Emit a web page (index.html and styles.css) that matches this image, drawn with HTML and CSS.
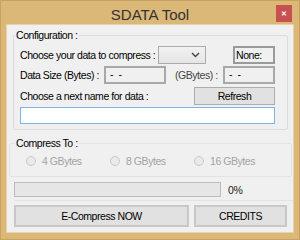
FILE: index.html
```html
<!DOCTYPE html>
<html lang="en">
<head>
    <meta charset="UTF-8">
    <title>SDATA Tool</title>
    <link rel="stylesheet" href="styles.css">
</head>
<body>

<div class="window">
    <div class="title-bar">
        <span class="title">SDATA Tool</span>
        <span class="close-btn">&#x2715;</span>
    </div>

    <div class="client">
        <fieldset class="group config">
            <legend>Configuration :</legend>
            <div class="row row-one">
                <span class="lbl choose">Choose your data to compress :</span>
                <div class="combo"><svg width="9" height="6" viewBox="0 0 9 6"><path d="M1 1 L4.5 4.5 L8 1" fill="none" stroke="#444" stroke-width="1.4"/></svg></div>
                <span class="none-box">None:</span>
            </div>
            <div class="row row-two">
                <span class="lbl size">Data Size (Bytes) :</span>
                <div class="ro-box bytes">- -</div>
                <span class="lbl gbytes">(GBytes) :</span>
                <div class="ro-box gb">- -</div>
            </div>
            <div class="row row-three">
                <span class="lbl">Choose a next name for data :</span>
                <button class="btn refresh">Refresh</button>
            </div>
            <div class="row row-four">
                <div class="name-input"></div>
            </div>
        </fieldset>

        <fieldset class="group compress">
            <legend>Compress To :</legend>
            <div class="radios">
                <label class="radio"><span class="dot"></span>4 GBytes</label>
                <label class="radio"><span class="dot"></span>8 GBytes</label>
                <label class="radio"><span class="dot"></span>16 GBytes</label>
            </div>
        </fieldset>

        <div class="progress-row">
            <div class="progress"></div>
            <span class="pct">0%</span>
        </div>

        <div class="button-row">
            <button class="btn big compress-now">E-Compress NOW</button>
            <button class="btn big credits">CREDITS</button>
        </div>
    </div>
</div>

</body>
</html>
```

FILE: styles.css
```css
body {
    margin: 0;
    font-family: "Liberation Sans", Arial, sans-serif;
    font-size: 10.5px;
    letter-spacing: -0.45px;
    color: #000;
}
.window {
    width: 300px;
    height: 240px;
    background-color: #dbb877;
    box-sizing: border-box;
    border: 1px solid #c9a25f;
    display: flex;
    flex-direction: column;
}
.title-bar {
    height: 24px;
    display: flex;
    justify-content: center;
    align-items: center;
    position: relative;
}
.title {
    font-size: 15px;
    letter-spacing: 0;
    color: #333;
    margin-top: 2px;
}
.close-btn {
    position: absolute;
    right: 7px;
    top: 4px;
    width: 16px;
    height: 17px;
    background-color: #c75050;
    color: #fff;
    font-size: 7px;
    font-weight: bold;
    display: flex;
    justify-content: center;
    align-items: center;
}
.client {
    margin-left: 6px;
    width: 286px;
    height: 207px;
    background-color: #f0f0f0;
    box-shadow: 0 0 0 1px #e6d3ae;
    box-sizing: border-box;
    padding-top: 4px;
    display: flex;
    flex-direction: column;
}
.group {
    margin: 0;
    border: 1px solid #dcdcdc;
    border-radius: 2px;
}
.group legend {
    padding: 0 1px;
    line-height: 13px;
}
.config {
    margin-left: 6px;
    width: 275px;
    box-sizing: border-box;
    padding: 4px 12px 5px 6px;
}
.config legend { margin-left: -5px; }
.row {
    display: flex;
    align-items: center;
    height: 18px;
}
.row-two { margin-top: 2px; }
.row-three { margin-top: 3px; }
.row-four { margin-top: 2px; height: 17px; }
.lbl {
    white-space: nowrap;
}
.choose { width: 138px; }
.combo {
    width: 48px;
    height: 18px;
    box-sizing: border-box;
    border: 1px solid #acacac;
    background: linear-gradient(#f2f2f2, #e5e5e5);
    display: flex;
    justify-content: flex-end;
    align-items: center;
    padding-right: 5px;
}
.none-box {
    margin-left: 27px;
    width: 42px;
    height: 18px;
    box-sizing: border-box;
    border: 2px solid #9a9a9a;
    padding-left: 1px;
    line-height: 14px;
}
.size { width: 84px; }
.ro-box {
    height: 18px;
    box-sizing: border-box;
    border: 2px solid #a8a8a8;
    padding-left: 4px;
    line-height: 13px;
    letter-spacing: 1px;
}
.bytes { width: 62px; }
.gbytes {
    width: 57px;
    box-sizing: border-box;
    padding-left: 9px;
    color: #444;
}
.gb { width: 52px; }
.row-three .lbl { flex: 1; }
.btn {
    font-family: "Liberation Sans", Arial, sans-serif;
    font-size: 10.5px;
    letter-spacing: -0.45px;
    background-color: #e1e1e1;
    border: 1px solid #adadad;
    padding: 0;
    color: #000;
}
.refresh {
    width: 81px;
    height: 18px;
}
.name-input {
    width: 255px;
    height: 17px;
    box-sizing: border-box;
    background-color: #fff;
    border: 1px solid #7eb4ea;
}
.compress {
    margin: 7px 1px 0 2px;
    padding: 4px 0 6px 0;
    border-color: #e3e3e3;
    color: #000;
    height: 40px;
    box-sizing: border-box;
}
.compress legend { margin-left: 5px; }
.radios {
    display: grid;
    grid-template-columns: 84px 84px auto;
    align-items: center;
    height: 14px;
    padding-left: 16px;
    color: #a3a3a3;
}
.radio {
    display: flex;
    align-items: center;
}
.dot {
    width: 10px;
    height: 10px;
    box-sizing: border-box;
    border: 1px solid #c9c9c9;
    border-radius: 50%;
    background-color: #e9e9e9;
    margin-right: 6px;
}
.progress-row {
    display: flex;
    align-items: center;
    margin: 5px 0 0 7px;
    padding-bottom: 3px;
    border-bottom: 1px solid #e3e3e3;
}
.progress {
    width: 207px;
    height: 15px;
    box-sizing: border-box;
    background-color: #e6e6e6;
    border: 1px solid #bcbcbc;
}
.pct {
    margin-left: 7px;
    color: #222;
}
.button-row {
    display: flex;
    margin: 4px 0 0 7px;
    gap: 5px;
}
.big {
    height: 22px;
    border-width: 2px;
    border-color: #c8c8c8;
}
.compress-now { width: 175px; }
.credits { width: 93px; }
```
